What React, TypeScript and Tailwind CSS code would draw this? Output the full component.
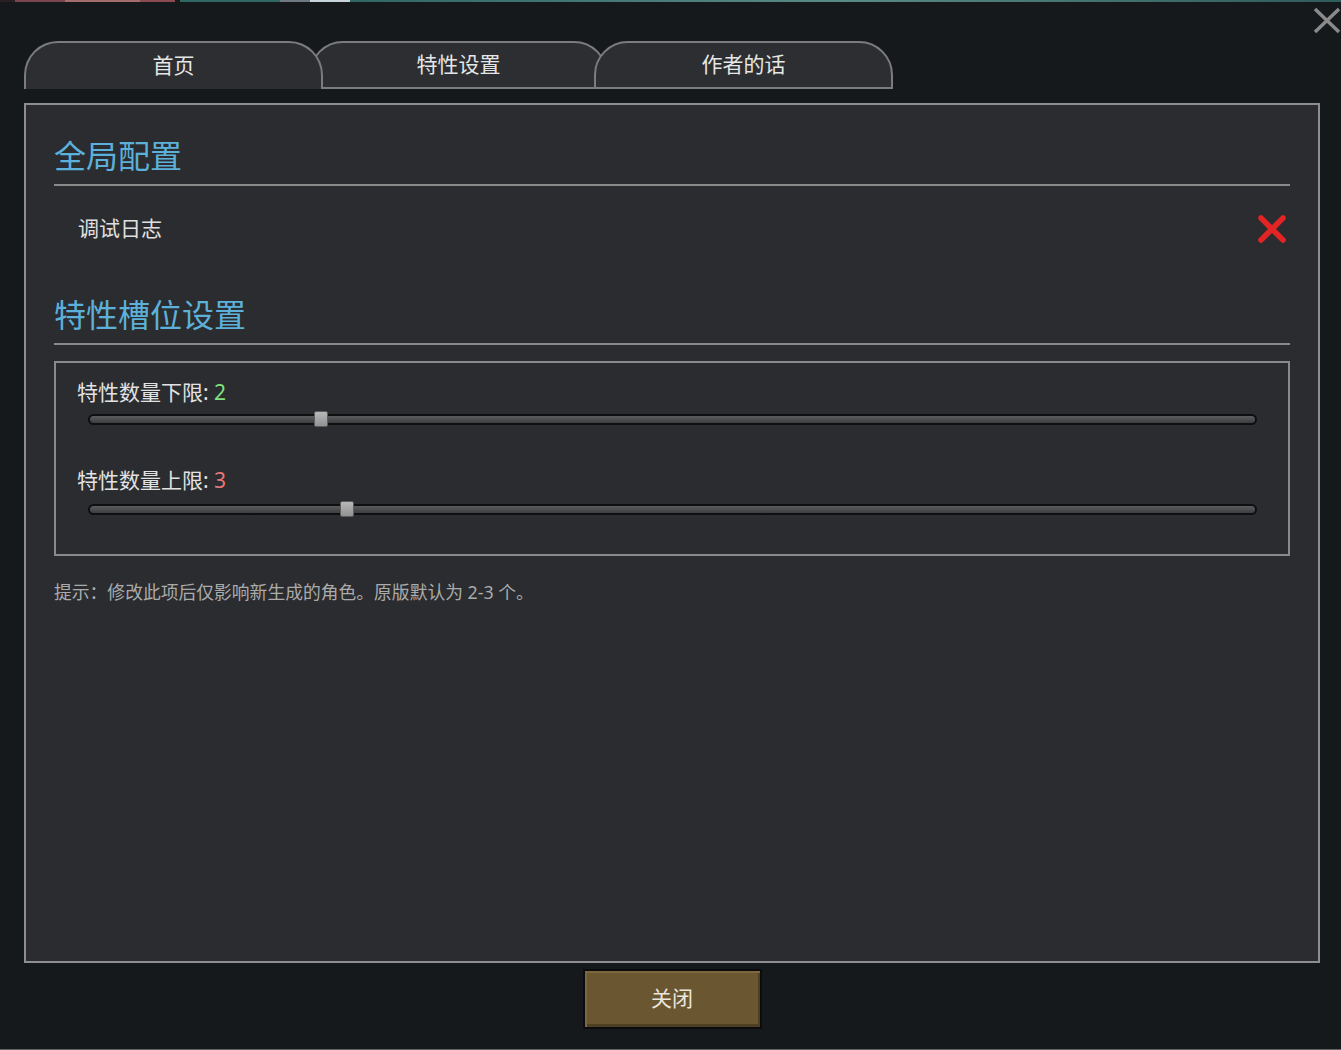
import React from "react";

const FONT = { fontFamily: '"Noto Sans", "Noto Sans CJK SC", sans-serif' };

function Tab({ label, active, z, first }: { label: string; active?: boolean; z: string; first?: boolean }) {
  return (
    <div
      className={`relative ${z} ${first ? "" : "-ml-[14px]"} w-[299px] h-[48px] rounded-t-[34px] border-2 border-[#7c7c7c] bg-[#2c2e31] flex items-center justify-center pb-[2px] ${
        active ? "border-b-0" : ""
      }`}
    >
      <span className="text-[21px] leading-[28px] text-[#e6e6e6]">{label}</span>
    </div>
  );
}

function Slider({ label, value, valueColor, pos, gap }: { label: string; value: number; valueColor: string; pos: number; gap: string }) {
  return (
    <div>
      <div className="pl-[21px] text-[21px] leading-[28px] text-[#e2e2e2]">
        {label}: <span className={valueColor}>{value}</span>
      </div>
      <div className={`relative ml-[32px] mr-[31px] h-[16px] ${gap} flex items-center`}>
        <div className="w-full h-[11px] rounded-full bg-[#0e0f10] p-[2px]">
          <div className="w-full h-full rounded-full bg-gradient-to-b from-[#5a5c5e] to-[#3c3e40]" />
        </div>
        <div
          className="absolute top-0 w-[14px] h-[16px] rounded-[2px] border border-[#5e5e5e] bg-gradient-to-b from-[#b8b8b8] to-[#929292]"
          style={{ left: pos - 7 }}
        />
      </div>
    </div>
  );
}

export default function App() {
  return (
    <div className="relative w-[1341px] h-[1050px] bg-[#16191c] flex flex-col overflow-hidden" style={FONT}>
      {/* top strip */}
      <div className="h-[2px] flex">
        <div className="w-[15px] bg-[#2a2024]" />
        <div className="w-[50px] bg-[#7a4652]" />
        <div className="w-[75px] bg-[#a46e6e]" />
        <div className="w-[35px] bg-[#8a4a52]" />
        <div className="w-[5px] bg-[#1a1a1a]" />
        <div className="w-[100px] bg-[#2f6765]" />
        <div className="w-[30px] bg-[#707880]" />
        <div className="w-[40px] bg-[#c8d6dc]" />
        <div className="flex-1 bg-gradient-to-r from-[#2f6765] via-[#5a8a86] to-[#2f5c5a]" />
      </div>

      {/* window close */}
      <svg className="absolute top-[7px] left-[1313px]" width="28" height="27" viewBox="0 0 28 27">
        <path d="M2 2 L26 25 M26 2 L2 25" stroke="#8a8a8a" strokeWidth="3.5" />
      </svg>

      {/* tabs */}
      <div className="mt-[39px] ml-[24px] flex items-start">
        <Tab label="首页" active z="z-30" first />
        <Tab label="特性设置" z="z-10" />
        <Tab label="作者的话" z="z-20" />
      </div>

      {/* panel */}
      <div className="mt-[14px] ml-[24px] w-[1296px] h-[860px] border-2 border-[#8e8e8e] bg-[#2a2c2f] px-[28px] pt-[31px]">
        <div className="text-[32px] leading-[40px] text-[#5cb0da]">全局配置</div>
        <div className="mt-[8px] h-[2px] bg-[#8a8a8a]" />

        <div className="mt-[18px] h-[50px] flex items-center justify-between pl-[24px] pr-[2px]">
          <span className="text-[21px] leading-[28px] text-[#e0e0e0] -mt-[2px]">调试日志</span>
          <svg width="32" height="32" viewBox="0 0 32 32">
            <path d="M5 5 L27 27 M27 5 L5 27" stroke="#e32424" strokeWidth="5.5" strokeLinecap="round" />
          </svg>
        </div>

        <div className="mt-[41px] text-[32px] leading-[40px] text-[#5cb0da]">特性槽位设置</div>
        <div className="mt-[8px] h-[2px] bg-[#8a8a8a]" />

        <div className="mt-[16px] h-[195px] border-2 border-[#8a8a8a] pt-[15px]">
          <Slider label="特性数量下限" value={2} valueColor="text-[#80e27e]" pos={233} gap="mt-[5px]" />
          <div className="mt-[39px]" />
          <Slider label="特性数量上限" value={3} valueColor="text-[#e57676]" pos={259} gap="mt-[7px]" />
        </div>

        <div className="mt-[24px] text-[17.8px] leading-[24px] text-[#ababab]">
          提示：修改此项后仅影响新生成的角色。原版默认为 2-3 个。
        </div>
      </div>

      {/* close button */}
      <div className="mt-[6px] self-center ml-[3px] w-[179px] h-[60px] border-2 border-[#0c0c0c] bg-[#6b5632] flex items-center justify-center shadow-[inset_2px_2px_0_#7d6740,inset_-2px_-3px_0_#4f3f24]">
        <span className="text-[21px] leading-[28px] text-[#ebe6dc] -mt-[2px]">关闭</span>
      </div>

      <div className="mt-auto h-[1px] bg-[#5f6366]" />
    </div>
  );
}
